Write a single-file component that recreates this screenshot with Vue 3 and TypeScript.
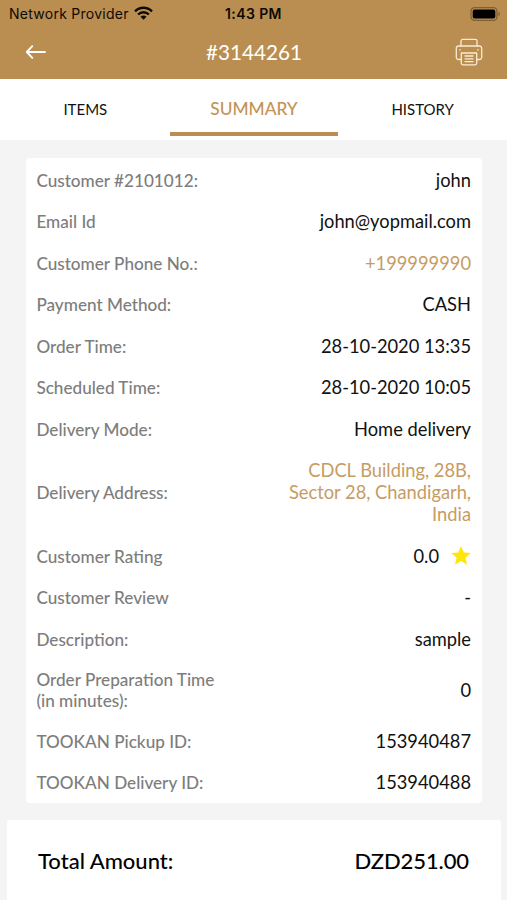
<script setup lang="ts">
interface Row {
  label: string
  value: string
  accent?: boolean
  star?: boolean
}

const tabs: string[] = ['ITEMS', 'SUMMARY', 'HISTORY']
const activeTab = 'SUMMARY'

const rows: Row[] = [
  { label: 'Customer #2101012:', value: 'john' },
  { label: 'Email Id', value: 'john@yopmail.com' },
  { label: 'Customer Phone No.:', value: '+199999990', accent: true },
  { label: 'Payment Method:', value: 'CASH' },
  { label: 'Order Time:', value: '28-10-2020 13:35' },
  { label: 'Scheduled Time:', value: '28-10-2020 10:05' },
  { label: 'Delivery Mode:', value: 'Home delivery' },
  { label: 'Delivery Address:', value: 'CDCL Building, 28B, Sector 28, Chandigarh, India', accent: true },
  { label: 'Customer Rating', value: '0.0', star: true },
  { label: 'Customer Review', value: '-' },
  { label: 'Description:', value: 'sample' },
  { label: 'Order Preparation Time (in minutes):', value: '0' },
  { label: 'TOOKAN Pickup ID:', value: '153940487' },
  { label: 'TOOKAN Delivery ID:', value: '153940488' },
]
</script>

<template>
  <div class="screen">
    <header class="header">
      <div class="status">
        <div class="carrier">
          <span>Network Provider</span>
          <svg class="wifi" viewBox="0 0 19 14" width="19" height="14">
            <g fill="none" stroke="#0d0a05" stroke-width="2.4">
              <path d="M1 5.3C5.8.5 13.2.5 18 5.3" />
              <path d="M4.1 8.5c3-3 7.800-3 10.800 0" />
            </g>
            <path d="M6.500 10.700c1.700-1.600 4.300-1.600 6 0l-3 3z" fill="#0d0a05" />
          </svg>
        </div>
        <span class="clock">1:43 PM</span>
        <svg class="battery" viewBox="0 0 31 14" width="31" height="14">
          <rect x="1" y="0.700" width="26" height="12.600" rx="3.600" fill="none" stroke="#7f6035" stroke-width="1.300" />
          <rect x="2.700" y="2.500" width="22.600" height="9" rx="1.900" fill="#000" />
          <path d="M28.500 4.800c2 .8 2 3.600 0 4.400z" fill="#7f6035" />
        </svg>
      </div>
      <div class="navbar">
        <svg class="back" viewBox="0 0 22 16" width="22" height="16" fill="none" stroke="#fff" stroke-width="1.900" stroke-linecap="round" stroke-linejoin="round">
          <path d="M20 8H2.300M7.300 2.200 1.800 8l5.500 5.800" />
        </svg>
        <h1 class="title">#3144261</h1>
        <svg class="printer" viewBox="0 0 28 28" width="28" height="28" fill="none" stroke="#fbebd2" stroke-width="1.300" stroke-linejoin="round" stroke-linecap="round">
          <path d="M6 8V3a1.600 1.600 0 0 1 1.600-1.600h12.800A1.600 1.600 0 0 1 22 3v5" />
          <path d="M6.300 21.500H3.500a2.200 2.200 0 0 1-2.200-2.200v-9A2.200 2.200 0 0 1 3.500 8h21a2.200 2.200 0 0 1 2.200 2.300v9a2.200 2.200 0 0 1-2.200 2.200h-2.800" />
          <path d="M4.800 11.800h.6M22.500 11.800h.6M6.300 15h15.400v10.300a1.500 1.500 0 0 1-1.500 1.500H7.800a1.500 1.500 0 0 1-1.500-1.500z" />
          <path d="M10 18h8M10 20.800h8M10 23.600h8" />
        </svg>
      </div>
    </header>

    <nav class="tabs">
      <button v-for="tab in tabs" :key="tab" class="tab" :class="{ active: tab === activeTab }">{{ tab }}</button>
    </nav>

    <main class="content">
      <section class="card">
        <div v-for="row in rows" :key="row.label" class="row">
          <span class="label">{{ row.label }}</span>
          <span class="value" :class="{ accent: row.accent }">
            {{ row.value }}
            <svg v-if="row.star" class="star" viewBox="0 0 20 19" width="20" height="19">
              <path fill="#ffe60a" d="m10 0 2.800 6.500 7 .5-5.400 4.700 1.700 7-6.100-3.700-6.100 3.700 1.700-7L.2 7l7-.5z" />
            </svg>
          </span>
        </div>
      </section>

      <section class="total">
        <span>Total Amount:</span>
        <span class="amount">DZD251.00</span>
      </section>
    </main>
  </div>
</template>

<style>
body {
  margin: 0;
  background: #f4f4f4;
}
</style>

<style scoped>
.screen {
  display: flex;
  flex-direction: column;
  width: 507px;
  height: 900px;
  overflow: hidden;
  background: #f4f4f4;
  font-family: Lato, 'Liberation Sans', sans-serif;
  color: #111;
}
.header {
  height: 79px;
  flex: none;
  background: #ba8e51;
}
.status {
  display: grid;
  grid-template-columns: 1fr auto 1fr;
  align-items: center;
  height: 27px;
  padding: 0 6px 0 9px;
  font-family: Inter, 'Liberation Sans', sans-serif;
  font-size: 14px;
  color: #0d0a05;
}
.carrier {
  display: flex;
  align-items: center;
  gap: 5px;
  letter-spacing: 0.26px;
}
.wifi {
  margin-top: -1px;
}
.clock {
  margin-right: 3px;
  font-weight: 600;
  letter-spacing: 0.4px;
}
.battery {
  justify-self: end;
}
.navbar {
  display: grid;
  grid-template-columns: 1fr auto 1fr;
  align-items: center;
  height: 50px;
  padding: 0 24px 0 25px;
}
.title {
  margin: 0;
  font-size: 20.7px;
  line-height: 26px;
  font-weight: 400;
  color: #fff;
}
.printer {
  justify-self: end;
}
.tabs {
  display: grid;
  grid-template-columns: repeat(3, 1fr);
  height: 61px;
  flex: none;
  padding-left: 1px;
  background: #fff;
}
.tab {
  height: 57px;
  padding: 6px 0 0;
  border: 0;
  border-bottom: 4px solid transparent;
  background: none;
  font: 400 15px Lato, sans-serif;
  color: #111;
}
.tab.active {
  border-color: #ba8e51;
  font-size: 17.3px;
  font-weight: 500;
  color: #c49356;
}
.content {
  flex: 1;
  display: flex;
  flex-direction: column;
  gap: 17px;
  padding: 18px 6px 0 7px;
}
.card {
  margin: 0 19px;
  padding: 1px 11px 0 10.4px;
  border-radius: 4px;
  background: #fff;
}
.row {
  display: flex;
  align-items: center;
  justify-content: space-between;
  box-sizing: border-box;
  min-height: 41.5px;
  padding: 9.75px 0;
}
.label {
  width: 190px;
  margin: 1px 0 -1px;
  font-size: 17.15px;
  line-height: 20.5px;
  font-weight: 500;
  color: #7d7d7d;
}
.value {
  display: flex;
  align-items: center;
  justify-content: flex-end;
  gap: 12px;
  width: 200px;
  font-size: 18.3px;
  line-height: 22px;
  text-align: right;
}
.value.accent {
  color: #c69c64;
}
.total {
  flex: 1;
  display: flex;
  justify-content: space-between;
  align-items: flex-start;
  padding: 27px 32px 0 31px;
  border-radius: 3px 3px 0 0;
  background: #fff;
  font-size: 22px;
  line-height: 28px;
  font-weight: 500;
  color: #000;
}
.amount {
  letter-spacing: -0.1px;
}
</style>
